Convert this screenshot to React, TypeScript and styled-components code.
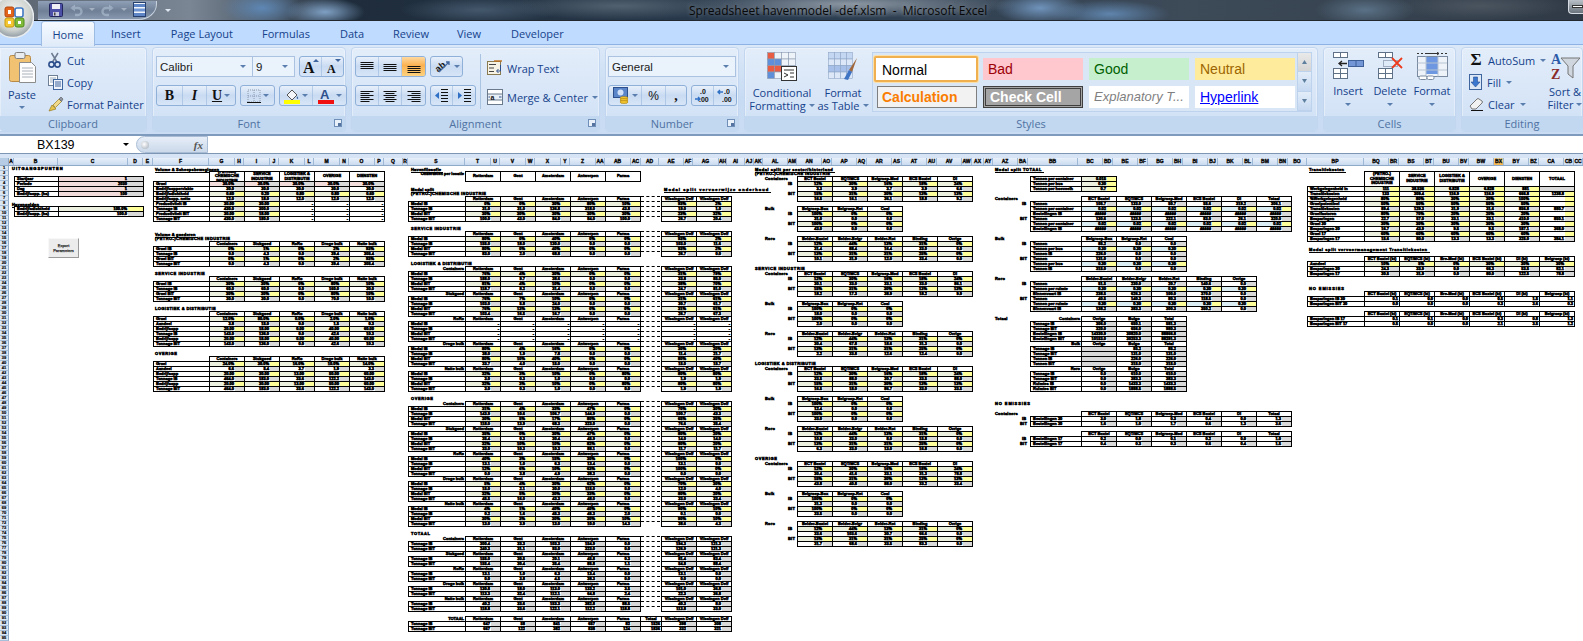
import React from 'react';
import styled, { createGlobalStyle, css } from 'styled-components';

const Global = createGlobalStyle`
  html, body { margin: 0; padding: 0; background: #fff; overflow: hidden; }
  #root { width: 1583px; height: 641px; overflow: hidden; position: relative; }
`;

const uiFont = `"Open Sans", "Noto Sans", sans-serif`;
const cellFont = `"Liberation Sans", Arial, sans-serif`;

/* ---------- window chrome ---------- */
const Window = styled.div`
  width: 1583px; height: 641px; position: relative; overflow: hidden;
  display: flex; flex-direction: column; font-family: ${uiFont};
`;
const TitleBar = styled.header`
  height: 21px; flex: none; display: flex; align-items: center; position: relative;
  border-bottom: 1px solid #23282e;
  box-sizing: border-box;
  background:
    radial-gradient(ellipse 45px 16px at 1040px 8px, #6f93bb 0%, transparent 100%),
    radial-gradient(ellipse 60px 14px at 1110px 14px, #5f84ac 0%, transparent 100%),
    radial-gradient(ellipse 50px 16px at 1365px 10px, #5a7186 0%, transparent 100%),
    radial-gradient(ellipse 90px 14px at 1480px 6px, #4a5560 0%, transparent 100%),
    radial-gradient(ellipse 40px 18px at 262px 8px, #5e87b4 0%, transparent 100%),
    radial-gradient(ellipse 40px 14px at 325px 12px, #7fa0c4 0%, transparent 100%),
    radial-gradient(ellipse 80px 14px at 480px 10px, #44586c 0%, transparent 100%),
    radial-gradient(ellipse 120px 14px at 620px 6px, #52616f 0%, transparent 100%),
    radial-gradient(ellipse 170px 14px at 850px 4px, #8b96a2 0%, transparent 100%),
    linear-gradient(90deg, #5a6470 0%, #7a8694 12%, #1e2c3b 22%, #2a3c50 50%, #3d4a58 75%, #2f3a46 100%);
`;
const QuickAccess = styled.div`
  margin-left: 38px; width: 119px; height: 19px; flex: none; box-sizing: border-box;
  display: flex; align-items: center; padding-left: 8px; gap: 0;
  background: linear-gradient(#8f9fb5, #6f7f95 55%, #8898ae);
  border: 1px solid #c9d3df; border-left: none; border-top: none;
  border-radius: 0 0 18px 0 / 0 0 16px 0;
`;
const QatSlot = styled.span<{ $w: number; $dim?: boolean }>`
  width: ${p => p.$w}px; flex: none; display: flex; align-items: center; justify-content: center;
  opacity: ${p => (p.$dim ? 0.45 : 1)};
`;
const Customize = styled.span`
  margin-left: 8px; width: 6px; flex: none; display: flex;
`;
const WindowTitle = styled.div`
  margin-left: 518px; font-size: 12px; color: #080808; white-space: pre;
  font-family: ${uiFont}; text-shadow: 0 0 5px rgba(255,255,255,.4);
`;
const WinControl = styled.div`
  position: absolute; right: 0; top: 0; width: 15px; height: 14px; box-sizing: border-box;
  background: linear-gradient(#b9c0c8, #6a737c);
  border: 1px solid #d7dce2; border-right: none; border-top: none; border-radius: 0 0 0 4px;
  display: flex; align-items: center; padding-left: 3px;
  &::after { content: ''; width: 12px; height: 3px; background: #fff; border: 1px solid #333; box-sizing: border-box; }
`;
const OfficeOrb = styled.div`
  position: absolute; left: -6px; top: -4px; width: 40px; height: 43px; z-index: 5;
`;
const TabStrip = styled.nav`
  height: 24px; flex: none; display: flex; background: #bfdbff; position: relative;
  border-bottom: 1px solid #8db2e3; box-sizing: border-box;
`;
const Tab = styled.div<{ $x: number; $active?: boolean }>`
  margin-left: ${p => p.$x}px; font-size: 11px; color: #15428b; padding-top: 5px; line-height: 15px; flex: none;
  ${p => p.$active && css`
    height: 25px; width: 54px; text-align: center; box-sizing: border-box; border: 1px solid #9dbce4; border-bottom: none;
    border-radius: 3px 3px 0 0; background: linear-gradient(#f5faff, #e0ebf9); z-index: 2;
  `}
`;
const Ribbon = styled.section`
  height: 91px; flex: none; box-sizing: border-box; padding-top: 2px; display: flex; gap: 5px;
  overflow: hidden; background: linear-gradient(#dbe8f8, #c7dbf3 60%, #c9dcf3);
  border-bottom: 2px solid #7e9bbd;
`;
const Group = styled.div<{ $w: number; $first?: boolean }>`
  width: ${p => p.$w}px; height: 85px; flex: none; box-sizing: border-box; display: flex; flex-direction: column;
  border: 1px solid #c2d7ef; border-radius: 4px;
  ${p => p.$first && 'border-left: none; border-radius: 0 4px 4px 0;'}
  background: linear-gradient(#e3edfa, #cfe0f5);
  box-shadow: inset 0 0 0 1px rgba(255,255,255,.35);
`;
const GroupBody = styled.div<{ $pl?: number; $pt?: number }>`
  height: 68px; flex: none; display: flex; box-sizing: border-box;
  padding-left: ${p => p.$pl ?? 0}px; padding-top: ${p => p.$pt ?? 0}px;
`;
const GroupLabel = styled.div`
  height: 15px; flex: none; position: relative; background: #c2d8f0; color: #4f72a2;
  font-size: 11px; line-height: 15px; text-align: center; border-radius: 0 0 3px 3px;
`;
const Launcher = styled.span`
  position: absolute; right: 3px; top: 3px; width: 8px; height: 8px; box-sizing: border-box;
  border: 1px solid #6f8fb8; background: #e8f0fa;
  &::after { content: ''; position: absolute; right: 0; bottom: 0; width: 3px; height: 3px; background: #54749f; }
`;
const PasteButton = styled.div`
  width: 28px; flex: none; display: flex; flex-direction: column; align-items: center;
  font-size: 11px; color: #15428b; padding-top: 4px; line-height: 13px;
`;
const SmallColumn = styled.div<{ $ml: number; $pt?: number }>`
  margin-left: ${p => p.$ml}px; display: flex; flex-direction: column; padding-top: ${p => p.$pt ?? 0}px;
`;
const SmallItem = styled.div<{ $gap?: number }>`
  height: 22px; display: flex; align-items: center; gap: ${p => p.$gap ?? 4}px; font-size: 11px; color: #15428b; white-space: nowrap;
`;
const ControlRows = styled.div`
  display: flex; flex-direction: column; gap: 8px; padding-top: 8px;
`;
const ControlRow = styled.div`
  display: flex; height: 21px; gap: 4px;
`;
const Combo = styled.div<{ $w: number }>`
  width: ${p => p.$w}px; height: 21px; box-sizing: border-box; display: flex; align-items: center; justify-content: space-between;
  padding: 0 6px 0 3px; background: #eaf2fb; border: 1px solid #abc3e0; font-family: ${cellFont}; font-size: 11.5px; color: #1a1a1a;
  margin-right: ${p => (p.$w > 50 && p.$w < 100 ? '-5px' : '0')};
`;
const BtnSet = styled.div`
  display: flex; height: 21px; box-sizing: border-box; border: 1px solid #8fb0d8; border-radius: 3px;
  background: linear-gradient(#e8f0fb, #c9dbf2 50%, #d7e5f7); overflow: hidden;
`;
const Tool = styled.div<{ $w: number; $on?: boolean; $serif?: boolean }>`
  width: ${p => p.$w}px; height: 100%; flex: none; display: flex; align-items: center; justify-content: center; gap: 2px;
  border-right: 1px solid rgba(141,176,216,.5); box-sizing: border-box; color: #111;
  &:last-child { border-right: none; }
  ${p => p.$serif && `font-family: "Liberation Serif", serif; font-size: 14px; font-weight: bold;`}
  ${p => p.$on && `background: linear-gradient(#ffd9a0, #fbb14f 45%, #fdd27f);`}
`;
const Caret = styled.span<{ $c?: string }>`
  width: 0; height: 0; flex: none; display: inline-block;
  border-left: 3px solid transparent; border-right: 3px solid transparent; border-top: 3px solid ${p => p.$c ?? '#5a7fae'};
`;
const Divider = styled.div`
  width: 1px; height: 55px; margin: 6px 6px 0 4px; background: #a9c3e2; flex: none;
`;
const BigButton = styled.div<{ $w: number }>`
  width: ${p => p.$w}px; flex: none; display: flex; flex-direction: column; align-items: center;
  padding-top: 4px; font-size: 11px; line-height: 13px; color: #15428b; text-align: center; white-space: nowrap;
  svg { margin-bottom: 5px; }
`;
const CaretLine = styled.span`
  display: inline-flex; align-items: center; gap: 3px;
`;
const Gallery = styled.div`
  width: 426px; height: 60px; margin-left: 3px; margin-top: 4px; box-sizing: border-box; flex: none;
  padding: 5px 0 0 4px; display: grid; grid-template-columns: repeat(4, 100px); grid-auto-rows: 22px; gap: 6px;
  background: #d9e6f6; border: 1px solid #bdd2ec;
`;
const StyleCell = styled.div<{ $bg: string; $fg: string; $bold?: boolean; $italic?: boolean; $box?: string; $selected?: boolean; $link?: boolean }>`
  font-family: ${cellFont}; font-size: ${p => (p.$italic ? 13 : 14)}px; line-height: 20px; box-sizing: border-box; padding-left: 4px; white-space: nowrap; overflow: hidden;
  background: ${p => p.$bg}; color: ${p => p.$fg};
  font-weight: ${p => (p.$bold ? 700 : 400)}; font-style: ${p => (p.$italic ? 'italic' : 'normal')};
  text-decoration: ${p => (p.$link ? 'underline' : 'none')};
  border: ${p => p.$box ?? '1px solid transparent'};
  ${p => p.$selected && `margin: -2px -1px -2px -3px; height: 26px; line-height: 24px; padding-left: 6px; border: 2px solid #f0b050; box-shadow: 0 0 0 1px #fae0ac; border-radius: 2px;`}
`;
const Scroller = styled.div`
  width: 14px; height: 60px; margin-top: 4px; flex: none; display: flex; flex-direction: column; box-sizing: border-box;
  border: 1px solid #bdd2ec; border-left: none;
`;
const ScrollPart = styled.div<{ $dim?: boolean }>`
  flex: 1; display: flex; align-items: center; justify-content: center; border-bottom: 1px solid #bdd2ec;
  background: ${p => (p.$dim ? 'linear-gradient(#e9e9e9,#d5d5d5)' : 'linear-gradient(#e3edf9,#c6d9f1)')};
`;
const Sigma = styled.span`
  font-family: "Liberation Serif", serif; font-size: 17px; font-weight: bold; color: #111; width: 14px; line-height: 14px; text-align: center;
`;

/* ---------- formula bar ---------- */
const FormulaBar = styled.div`
  height: 18px; flex: none; display: flex; box-sizing: border-box; background: #fff; border-bottom: 1px solid #7d96b3;
`;
const NameBox = styled.div`
  width: 136px; flex: none; box-sizing: border-box; padding: 0 7px 0 37px; display: flex; align-items: center; justify-content: space-between;
  font-family: ${cellFont}; font-size: 12.5px; color: #000;
`;
const FxPill = styled.div`
  width: 72px; flex: none; box-sizing: border-box; border: 1px solid #a9bdd6; border-radius: 10px 0 0 10px;
  background: linear-gradient(#e7eef8, #cbd9ea); display: flex; align-items: center; justify-content: space-between; padding: 0 4px;
  font-family: "Liberation Serif", serif; font-style: italic; font-weight: bold; font-size: 11px; color: #555;
`;
const Orb = styled.span`
  width: 8px; height: 8px; border-radius: 50%; background: radial-gradient(circle at 40% 40%, #fff, #9fa9b5);
`;
const HeadStrip = styled.div`
  height: 4px; flex: none; background: #d6e4f5;
`;

/* ---------- sheet ---------- */
const ColHeadRow = styled.div`
  height: 8px; flex: none; display: flex; border-bottom: 1px solid #8fa9c8; box-sizing: border-box;
`;
const Corner = styled.div`
  width: 9px; flex: none; background: #b6cbe4; box-sizing: border-box; border-right: 1px solid #8fa9c8;
`;
const ColHead = styled.div<{ $w: number; $hi?: boolean }>`
  width: ${p => p.$w}px; flex: none; box-sizing: border-box; border-right: 1px solid #9fb8d6;
  background: ${p => (p.$hi ? 'linear-gradient(#fbdf9f,#f8b84e)' : 'linear-gradient(#e8f0fa,#c9daef)')};
  font: bold 5px/7px ${cellFont}; text-align: center; color: #111; overflow: hidden;
  -webkit-text-stroke: .35px #000;
`;
const SheetBody = styled.div`
  flex: 1; display: flex; min-height: 0; overflow: hidden; background: #fff;
`;
const RowHeads = styled.div`
  width: 9px; flex: none; display: flex; flex-direction: column;
`;
const RowHead = styled.div`
  height: 5px; flex: none; box-sizing: border-box; background: #dbe6f4; border-bottom: 1px solid #a8bfda; border-right: 1px solid #8fa9c8;
  font: bold 4px/4px ${cellFont}; text-align: center; color: #111; overflow: hidden; -webkit-text-stroke: .2px #000;
`;
const Section = styled.div<{ $w: number }>`
  width: ${p => p.$w}px; flex: none; display: grid; grid-auto-rows: 5px; grid-template-columns: 1fr; align-content: start;
`;
const Note = styled.div<{ $k: number; $x: number; $ls?: number; $under?: boolean }>`
  grid-column: 1; grid-row: ${p => p.$k + 1}; justify-self: start; margin-left: ${p => p.$x}px; white-space: nowrap;
  font: bold 4px/5px ${cellFont}; color: #000; letter-spacing: ${p => p.$ls ?? 0.2}px;
  -webkit-text-stroke: .5px #000;
  ${p => p.$under && `border-bottom: 1px solid #000; height: 4px; line-height: 4px; margin-top: 2px; padding-right: 2px;`}
`;
const Table = styled.div<{ $k: number; $n: number; $x: number; $cols: string }>`
  grid-column: 1; grid-row: ${p => p.$k + 1} / span ${p => p.$n}; justify-self: start; margin-left: ${p => p.$x}px;
  display: grid; grid-template-columns: ${p => p.$cols}; grid-auto-rows: 5px;
  font: bold 4px/4px ${cellFont}; color: #000; -webkit-text-stroke: .5px #000;
`;
const kindBg: Record<string, string> = { g: '#ebf1de', w: '#fff', p: '#f2dcdb', b: '#daeef3', n: '#fff', y: '#fff', a: '#d9d9d9', o: '#fff' };
const Cell = styled.div<{ $span?: number; $kind: string }>`
  box-sizing: border-box; margin: 0 -1px -1px 0; border: 1px solid #000; display: flex; overflow: hidden; white-space: nowrap;
  grid-row: span ${p => p.$span ?? 1}; background: ${p => kindBg[p.$kind] ?? '#fff'};
`;
const Label = styled(Cell)`
  padding-left: 2px;
`;
const Head = styled(Cell)`
  justify-content: center; text-align: center; align-items: center; line-height: 4.6px;
  white-space: ${p => ((p.$span ?? 1) > 1 ? 'normal' : 'nowrap')};
`;
const Right = styled.div<{ $span?: number }>`
  grid-row: span ${p => p.$span ?? 1}; text-align: right; padding-right: 1px; white-space: nowrap; box-sizing: border-box; height: 5px; line-height: 6px;
`;
const Blank = styled.div<{ $span?: number }>`
  grid-row: span ${p => p.$span ?? 1};
`;
const Dashed = styled.div`
  border-top: 1px dashed #000; margin: 0 1px -1px 1px; height: 6px; box-sizing: border-box;
`;
const Value = styled.div`
  flex: 1; text-align: right; padding-right: 1px; min-width: 0;
`;
const Mark = styled.div<{ $c: string; $w?: number }>`
  width: ${p => p.$w ?? 9}px; flex: none; background: ${p => p.$c};
`;
const MacroButton = styled.div`
  grid-column: 1; grid-row: 15 / span 5; margin: 2px 0 0 39px; width: 31px; height: 20px; justify-self: start; box-sizing: border-box;
  background: #ececec; border: 1px solid; border-color: #f8f8f8 #9a9a9a #9a9a9a #f8f8f8;
  font: 4px/5px ${cellFont}; color: #222; text-align: center; padding-top: 4px; -webkit-text-stroke: .25px #333;
`;

/* ---------- table data ---------- */
type Spec = { k: number; x: number; cols: string; rows: string[][]; tall?: number };

const T: React.FC<Spec & { mark?: number }> = ({ k, x, cols, rows, tall, mark }) => {
  const n = rows.length + (tall ? tall - 1 : 0);
  return (
    <Table $k={k} $n={n} $x={x} $cols={cols}>
      {rows.map((row, ri) =>
        row.map((c, ci) => {
          const kind = c[0];
          const text = c.slice(1);
          const span = ri === 0 && tall ? tall : 1;
          const key = `${ri}-${ci}`;
          if (kind === 'e') return <Blank key={key} $span={span} />;
          if (kind === 'r') return <Right key={key} $span={span}>{text}</Right>;
          if (kind === 'd') return <Dashed key={key} />;
          if (kind === 'l') return <Label key={key} $kind="n" $span={span}>{text}</Label>;
          if (kind === 'h') return <Head key={key} $kind="n" $span={span}>{text}</Head>;
          const mc = kind === 'g' || kind === 'b' || kind === 'y' ? '#ffff99' : kind === 'w' || kind === 'p' || kind === 'o' ? '#d9d9d9' : '';
          return (
            <Cell key={key} $kind={kind} $span={span}>
              <Value>{text}</Value>
              {mc && <Mark $c={mc} $w={mark} />}
            </Cell>
          );
        }),
      )}
    </Table>
  );
};

const goods = ['Containers', 'Stukgoed', 'RoRo', 'Droge bulk', 'Natte bulk'];
const gHead = (first = 'e') => [first, ...goods.map(g => 'h' + g)];
const cols5B = '56px repeat(5, 35px)';
const secB: Spec[] = [
  { k: 1, x: 0, cols: cols5B, tall: 2, rows: [
    ['e', 'h(PETRO-) CHEMISCHE INDUSTRIE', 'hSERVICE INDUSTRIE', 'hLOGISTIEK & DISTRIBUTIE', 'hOVERIGE', 'hDIENSTEN'],
    ['lGroei', 'p30.0%', 'p30.0%', 'p30.0%', 'p30.0%', 'p30.0%'],
    ['lBedrijfsoppervlakte', 'w30.0', 'w30.0', 'w30.0', 'w30.0', 'w30.0'],
    ['lBedrijfsdichtheid', 'g0.60', 'g0.20', 'g0.80', 'g0.80', 'g0.60'],
    ['lBedrijfsopp. netto', 'w12.0', 'w18.0', 'w12.0', 'w12.0', 'w12.0'],
    ['lProductiviteit IB', 'g30.00', 'g30.00', 'n-', 'n-', 'n-'],
    ['lTonnage IB', 'w430.0', 'w300.0', 'n-', 'n-', 'n-'],
    ['lProductiviteit BIT', 'g30.00', 'g18.00', 'n-', 'n-', 'n-'],
    ['lTonnage BIT', 'w430.0', 'w180.0', 'n-', 'n-', 'n-'],
  ]},
  { k: 15, x: 0, cols: cols5B, rows: [
    gHead(),
    ['lGroei IB', 'g0%', 'g1%', 'g0%', 'g2%', 'g93%'],
    ['lTonnage IB', 'w0.0', 'w4.3', 'w0.0', 'w39.4', 'w305.4'],
    ['lGroei BIT', 'g0%', 'g1%', 'g0%', 'g2%', 'g93%'],
    ['lTonnage BIT', 'w0.0', 'w4.3', 'w0.0', 'w39.4', 'w305.4'],
  ]},
  { k: 22, x: 0, cols: cols5B, rows: [
    gHead(),
    ['lGroei IB', 'g30%', 'g30%', 'g0%', 'g80%', 'g10%'],
    ['lTonnage IB', 'w60.0', 'w60.0', 'w0.0', 'w160.0', 'w30.0'],
    ['lGroei BIT', 'g30%', 'g30%', 'g0%', 'g80%', 'g10%'],
    ['lTonnage BIT', 'w30.0', 'w30.0', 'w0.0', 'w70.0', 'w10.0'],
  ]},
  { k: 29, x: 0, cols: cols5B, rows: [
    gHead(),
    ['lGroei', 'g12.0%', 'g80.0%', 'g0.0%', 'g2.0%', 'g1.0%'],
    ['lAandeel', 'w3.8', 'w15.0', 'w0.0', 'w1.5', 'w0.3'],
    ['lBedrijfsopp', 'g20.00', 'g18.00', 'g0.00', 'g40.00', 'g60.00'],
    ['lTonnage IB', 'w143.0', 'w136.0', 'w0.0', 'w42.6', 'w10.3'],
    ['lBedrijfsopp', 'g20.00', 'g18.00', 'g0.00', 'g40.00', 'g60.00'],
    ['lTonnage BIT', 'w143.0', 'w136.0', 'w0.0', 'w42.6', 'w10.3'],
  ]},
  { k: 38, x: 0, cols: cols5B, rows: [
    gHead(),
    ['lGroei', 'g24.0%', 'g30.0%', 'g16.0%', 'g10.0%', 'g14.0%'],
    ['lAandeel', 'w6.6', 'w5.4', 'w3.7', 'w1.9', 'w3.3'],
    ['lBedrijfsopp', 'g20.00', 'g30.00', 'g13.00', 'g50.00', 'g60.00'],
    ['lTonnage IB', 'w464.0', 'w183.0', 'w33.6', 'w122.2', 'w143.0'],
    ['lBedrijfsopp', 'g20.00', 'g30.00', 'g13.00', 'g50.00', 'g60.00'],
    ['lTonnage BIT', 'w464.0', 'w183.0', 'w33.6', 'w122.2', 'w143.0'],
  ]},
];

const ports = ['Rotterdam', 'Gent', 'Amsterdam', 'Antwerpen', 'Parma'];
const colsC = '57px repeat(5, 35px) 21px 35px 35px';
const cHead = (first: string, mid = 'd') => [first, ...ports.map(p => 'h' + p), mid, 'hVlissingen Delf', 'hVlissingen Delf'];
const cRows = (a: string[], b: string[], c: string[], d: string[], ka = 'g', kb = 'w') => [
  ['lModal IB', ...a.slice(0, 5).map(v => ka + v), 'd', ...a.slice(5).map(v => ka + v)],
  ['lTonnage IB', ...b.slice(0, 5).map(v => kb + v), 'd', ...b.slice(5).map(v => kb + v)],
  ['lModal BIT', ...c.slice(0, 5).map(v => ka + v), 'd', ...c.slice(5).map(v => ka + v)],
  ['lTonnage BIT', ...d.slice(0, 5).map(v => kb + v), 'd', ...d.slice(5).map(v => kb + v)],
];
const sp = (s: string) => s.split(' ');
const cBlock = (y: number, first: string, a: string, b: string, c: string, d: string): Spec => ({
  k: (y - 167) / 5, x: 5, cols: colsC,
  rows: [cHead(first), ...cRows(sp(a), sp(b), sp(c), sp(d))],
});
const tBlock = (y: number, first: string, a: string, b: string): Spec => ({
  k: (y - 167) / 5, x: 5, cols: colsC,
  rows: [cHead(first),
    ['lTonnage IB', ...sp(a).slice(0, 5).map(v => 'w' + v), 'd', ...sp(a).slice(5).map(v => 'w' + v)],
    ['lTonnage BIT', ...sp(b).slice(0, 5).map(v => 'w' + v), 'd', ...sp(b).slice(5).map(v => 'w' + v)],
  ],
});
const dash = ['-', '-', '-', '-', '-', '-', '-'];
const secC: Spec[] = [
  { k: 1, x: 5, cols: '57px repeat(5, 35px)', tall: 2, rows: [
    ['rOnderdelen per locatie', ...ports.map(p => 'h' + p)],
  ]},
  cBlock(197, 'e', '0% 0% 30% 80% 10% 93% 2%', '31.0 31.0 136.8 318.0 43.8 19.0 1.0', '30% 30% 30% 30% 30% 23% 32%', '100.0 43.0 84.0 84.0 100.0 26.7 20.4'),
  cBlock(232, 'e', '80% 0% 40% 0% 0% 93% 2%', '155.0 18.0 130.0 0.0 0.0 103.0 11.6', '80% 0% 40% 0% 0% 93% 2%', '83.0 2.0 68.8 0.0 0.0 26.7 0.0'),
  cBlock(267, 'rContainers', '76% 4% 30% 0% 0% 31% 79%', '188.0 9.7 38.6 0.0 0.0 33.8 85.0', '81% 4% 10% 0% 0% 38% 70%', '118.7 8.2 31.4 0.0 0.0 24.7 81.0'),
  cBlock(292, 'rStukgoed', '76% 7% 10% 0% 0% 31% 61%', '103.0 5.8 24.0 0.0 0.0 30.7 61.7', '76% 13% 13% 0% 0% 31% 61%', '103.4 16.5 16.7 0.0 0.0 26.7 67.3'),
  { k: 30, x: 5, cols: colsC, rows: [cHead('rRoRo'), ...cRows(dash, dash, dash, dash, 'n', 'n')] },
  cBlock(342, 'rDroge bulk', '80% 4% 16% 0% 0% 30% 20%', '38.0 1.9 7.8 0.0 0.0 11.4 21.7', '80% 10% 40% 0% 0% 80% 40%', '33.7 4.0 15.0 0.0 0.0 15.0 15.7'),
  cBlock(367, 'rNatte bulk', '32% 3% 10% 0% 80% 80% 80%', '3.0 0.3 1.0 0.0 0.0 1.9 1.9', '32% 3% 10% 0% 80% 80% 80%', '3.0 0.3 1.0 0.0 0.0 1.9 1.9'),
  cBlock(402, 'rContainers', '31% 4% 33% 47% 0% 70% 30%', '143.9 10.6 106.7 144.9 0.0 100.7 43.3', '30% 5% 17% 80% 0% 65% 35%', '118.0 13.9 68.3 323.0 0.0 76.6 35.4'),
  cBlock(427, 'rStukgoed', '35% 0% 30% 47% 0% 80% 20%', '35.4 0.3 30.4 45.9 0.0 14.0 14.0', '32% 10% 10% 82% 0% 80% 20%', '33.0 10.3 10.3 88.1 0.0 11.7 11.7'),
  cBlock(452, 'rRoRo', '40% 3% 15% 30% 0% 100% 0%', '13.1 1.0 6.3 13.4 0.0 13.1 0.0', '12% 6% 10% 63% 0% 100% 0%', '0.0 3.8 4.9 38.3 0.0 0.0 0.0'),
  cBlock(477, 'rDroge bulk', '5% 4% 30% 62% 0% 70% 30%', '15.0 2.1 30.0 115.0 0.0 12.0 4.0', '32% 5% 30% 33% 0% 80% 20%', '45.5 16.0 43.3 48.0 0.0 33.0 33.4'),
  cBlock(502, 'rNatte bulk', '4% 1% 40% 40% 0% 90% 10%', '0.2 1.6 45.3 45.3 2.0 0.1 0.0', '30% 3% 30% 30% 10% 90% 10%', '13.0 3.9 13.0 10.0 14.3 38.6 4.3'),
  tBlock(537, 'rContainers', '300.4 33.3 103.3 154.9 0.0 194.3 121.3', '240.3 31.1 93.0 323.0 0.0 126.9 121.3'),
  tBlock(552, 'rStukgoed', '155.0 30.5 20.1 45.8 0.3 81.4 83.4', '155.4 30.4 35.4 85.8 1.1 54.8 88.4'),
  tBlock(567, 'rRoRo', '13.1 1.0 6.3 13.4 0.0 13.1 0.0', '0.0 3.8 4.5 38.3 0.0 0.0 0.0'),
  tBlock(582, 'rDroge bulk', '130.8 18.0 113.0 133.2 3.5 101.0 36.8', '113.3 32.4 112.1 64.8 2.4 22.3 36.8'),
  tBlock(597, 'rNatte bulk', '40.2 33.6 153.3 382.8 88.5 40.3 8.0', '118.8 33.6 122.1 112.2 118.8 113.8 33.0'),
  { k: 90, x: 5, cols: colsC, rows: [
    [...cHead('rTOTAAL', 'hTotaal')],
    ['lTonnage IB', 'w647', 'w58', 'w841', 'w657', 'w82', 'n1526', 'w398', 'w308'],
    ['lTonnage BIT', 'w667', 'w122', 'w382', 'w838', 'w124', 'n1836', 'w332', 'w321'],
  ]},
];

const cols5D = 'repeat(5, 35px)';
const dRows = (a: string, b: string, c: string, d: string) => [
  sp(a).map(v => 'g' + v), sp(b).map(v => 'w' + v), sp(c).map(v => 'g' + v), sp(d).map(v => 'w' + v),
];
const dHeadA = ['hECT Boxtel', 'hEQT/MCS', 'hBelgroep-Mod', 'hECS Boxtel', 'hDI'];
const dHeadB = ['hBelgroep-Box', 'hBelgroep-Ret', 'hCoal'];
const dHeadC = ['hBelder-Boxtel', 'hBelder-Belgr', 'hBelder-Rot', 'hBinding', 'hOvrige'];
const sect = (y: number, a: string[], b: string[], c: string[]): Spec[] => [
  { k: (y - 167) / 5, x: 52, cols: cols5D, rows: [dHeadA, ...dRows(a[0], a[1], a[2], a[3])] },
  { k: (y + 30 - 167) / 5, x: 52, cols: 'repeat(3, 35px)', rows: [dHeadB, ...dRows(b[0], b[1], b[2], b[3])] },
  { k: (y + 60 - 167) / 5, x: 52, cols: cols5D, rows: [dHeadC, ...dRows(c[0], c[1], c[2], c[3])] },
];
const secD: Spec[] = [
  ...sect(177, ['12% 30% 16% 18% 24%', '3.3 3.9 3.7 3.9 6.6', '15% 31% 30% 13% 13%', '16.5 16.1 36.1 18.8 9.2'],
    ['100% 0% 0%', '31.0 0.0 0.0', '100% 0% 0%', '43.0 0.0 0.0'],
    ['12% 44% 13% 31% 0%', '31.4 88.4 16.4 33.0 0.0', '13% 31% 31% 25% 0%', '10.1 31.9 12.0 33.4 0.0']),
  ...sect(272, ['12% 30% 16% 18% 24%', '30.1 33.0 33.1 33.0 86.1', '15% 31% 30% 13% 13%', '18.2 17.3 38.9 18.2 9.9'],
    ['100% 0% 0%', '18.0 0.0 0.0', '100% 0% 0%', '2.0 0.0 0.0'],
    ['12% 44% 13% 31% 0%', '30.4 67.8 18.6 31.3 0.0', '13% 31% 31% 25% 0%', '2.2 33.8 12.6 12.4 0.0']),
  ...sect(367, ['12% 30% 16% 18% 24%', '33.5 88.0 30.7 33.5 88.0', '15% 31% 30% 13% 13%', '16.5 18.0 86.7 33.0 33.5'],
    ['100% 0% 0%', '12.4 0.0 0.0', '100% 0% 0%', '33.0 0.0 0.0'],
    ['12% 44% 13% 31% 0%', '10.8 33.0 8.0 15.8 0.0', '13% 31% 31% 25% 0%', '6.3 33.0 13.0 16.8 0.0']),
  ...sect(462, ['12% 30% 16% 18% 24%', '30.4 41.6 33.1 31.3 78.8', '15% 31% 30% 13% 13%', '43.8 40.8 88.0 33.2 33.4'],
    ['100% 0% 0%', '31.3 0.0 0.0', '100% 0% 0%', '33.5 0.0 0.0'],
    ['12% 44% 13% 31% 0%', '33.6 103.6 30.7 66.6 0.0', '13% 31% 31% 25% 0%', '31.7 68.6 33.5 83.3 0.0']),
];

const colsE = (n: number) => `51px repeat(${n}, 35px)`;
const hE6 = ['e', ...dHeadA.map(x => x), 'hTotaal'];
const eRows = (tail: string[], k2: string, v: string[][]) =>
  v.map((vals, i) => ['l' + (i % 3 === 0 ? 'Tonnen' : i % 3 === 1 ? tail[0] : tail[1]), ...vals.map(x => (i % 3 === 1 ? k2 : 'w') + x)]);
const H = '#####';
const secE: Spec[] = [
  { k: 2, x: 45, cols: '51px 35px', rows: [
    ['lTonnen per container', 'g0.015'], ['lTonnen per bus', 'g0.30'], ['lTonnen per hoeveelh', 'g0.7'],
  ]},
  { k: 6, x: 45, cols: colsE(6), rows: [hE6, ...eRows(['Tonnen per container', 'Bestellingen IB'], 'b', [
    sp('105.7 133.0 50.7 55.6 319.2 306.1'), sp('0.02 0.02 0.02 0.02 0.02 0.02'), Array(6).fill(H),
    sp('130.6 123.5 222.1 83.0 26.1 320.0'), sp('0.02 0.02 0.02 0.02 0.02 0.02'), Array(6).fill(H),
  ])]},
  { k: 14, x: 45, cols: colsE(3), rows: [['e', ...dHeadB], ...eRows(['Tonnen per bus', 'Tonnen IB'], 'b', [
    sp('85.2 0.0 0.0'), sp('0.30 0.30 0.30'), sp('226.0 0.0 0.0'),
    sp('131.0 0.0 0.0'), sp('0.30 0.30 0.30'), sp('315.0 0.0 0.0'),
  ])]},
  { k: 22, x: 45, cols: colsE(5), rows: [['e', ...dHeadC], ...eRows(['Tonnen per ruimte', 'Binnenvaart IB'], 'b', [
    sp('51.5 230.0 20.7 140.6 0.0'), sp('0.30 0.30 0.30 0.30 0.30'), sp('238.5 626.3 100.0 370.0 0.0'),
    sp('40.5 140.3 80.3 118.5 0.0'), sp('0.30 0.30 0.30 0.30 0.30'), sp('138.2 383.3 300.3 350.2 0.0'),
  ])]},
  { k: 30, x: 45, cols: colsE(3), rows: [
    ['rContainers', 'hOvrige', 'hBulgo', 'hTotal'],
    ['lTonnage IB', 'w306.0', 'w650.1', 'w581.3'], ['lTonnage BIT', 'w320.0', 'w656.0', 'w980.3'],
    ['lBestellingen IB', 'w14330.9', 'w30820.0', 'w88866.8'], ['lBestellingen BIT', 'w10153.0', 'w30253.3', 'w88291.3'],
    ['rBulk', 'hOvrige', 'hBulgo', 'hTotal'],
    ['lTonnage IB', 'a', 'w85.2', 'w85.2'], ['lTonnage BIT', 'a', 'w131.0', 'w131.0'], ['lTonnen IB', 'a', 'w226.0', 'w226.0'], ['lTonnen BIT', 'a', 'w315.0', 'w315.0'],
    ['rRoro', 'hOvrige', 'hBulgo', 'hTotal'],
    ['lTonnage IB', 'w0.0', 'w610.0', 'w610.0'], ['lTonnage BIT', 'w0.0', 'w383.3', 'w383.3'], ['lRuimtes IB', 'w0.0', 'w1433.3', 'w1433.3'], ['lRuimtes BIT', 'w0.0', 'w1888.5', 'w1888.5'],
  ]},
  { k: 49, x: 45, cols: colsE(6), rows: [hE6,
    ['lBestellingen 30', 'w3.0', 'w1.8', 'w0.3', 'w0.4', 'w0.0', 'w1.3'],
    ['lBestellingen 30', 'w1.6', 'w1.0', 'w1.7', 'w0.6', 'w1.3', 'w3.6'],
  ]},
  { k: 53, x: 45, cols: colsE(6), rows: [hE6,
    ['lBestellingen 17', 'w0.2', 'w0.0', 'w0.1', 'w0.2', 'w0.0', 'w1.0'],
    ['lBestellingen 17', 'w0.4', 'w0.3', 'w0.3', 'w0.6', 'w0.4', 'w1.5'],
  ]},
];

const colsF = '57px repeat(6, 35px)';
const vF = (label: string, ...v: string[]) => ['l' + label, ...v];
const hF6 = ['e', 'hECT Boxtel (kt)', 'hEQT/MCS (kt)', 'hBre-Mod (kt)', 'hECS Boxtel (kt)', 'hDI (kt)', 'hBelgroep (kt)'];
const secF: Spec[] = [
  { k: 1, x: 0, cols: colsF, tall: 3, rows: [
    ['e', 'h(PETRO-) CHEMISCHE INDUSTRIE', 'hSERVICE INDUSTRIE', 'hLOGISTIEK & DISTRIBUTIE', 'hOVERIGE', 'hDIENSTEN', 'hTOTAAL'],
    vF('Werkgelegenheid in', 'g111', 'g38.536', 'g6.828', 'g6.828', 'g881', 'a'),
    vF('Transitiekosten', 'y133', 'y309.4', 'y116.9', 'y116.9', 'y666.8', 'y1238.8'),
    vF('%Werkgelegenheid', 'g80%', 'g80%', 'g30%', 'g30%', 'g100%', 'y'),
    vF('Groeipotentieel', 'g50%', 'g50%', 'g50%', 'g50%', 'g50%', 'y'),
    vF('Transitiekosten', 'w89.4', 'w129.3', 'w31.9', 'w31.6', 'w856.8', 'w880.7'),
    vF('Groeifactoren', 'g80%', 'g70%', 'g20%', 'g20%', 'g20%', 'y'),
    vF('Besparingen', 'w22.7', 'w57.0', 'w33.1', 'w33.1', 'w410.0', 'w850.1'),
    vF('Groei 30', 'g30%', 'g30%', 'g30%', 'g30%', 'g30%', 'y'),
    vF('Besparingen 30', 'w16.7', 'w43.9', 'w9.5', 'w9.5', 'w187.1', 'w368.0'),
    vF('Groei 17', 'g60%', 'g60%', 'g60%', 'g60%', 'g60%', 'y'),
    vF('Besparingen 17', 'w15.6', 'w80.0', 'w13.3', 'w13.3', 'w325.0', 'w384.1'),
  ]},
  { k: 18, x: 0, cols: colsF, rows: [hF6,
    vF('Aandeel', 'g10%', 'g5%', 'g0%', 'g30%', 'g30%', 'g30%'),
    vF('Besparingen 30', 'w24.3', 'w33.9', 'w0.0', 'w66.3', 'w53.5', 'w82.1'),
    vF('Besparingen 17', 'w30.5', 'w31.9', 'w0.0', 'w80.0', 'w122.5', 'w78.8'),
  ]},
  { k: 25, x: 0, cols: colsF, rows: [hF6,
    vF('Besparingen IB 30', 'n0.1', 'n0.0', 'n0.0', 'n0.5', 'n1.5', 'n1.1'),
    vF('Besparingen BIT 30', 'n0.0', 'n0.0', 'n0.0', 'n0.3', 'n3.6', 'n0.3'),
  ]},
  { k: 29, x: 0, cols: colsF, rows: [hF6,
    vF('Besparingen IB 17', 'n0.1', 'n0.1', 'n0.0', 'n0.3', 'n0.8', 'n1.3'),
    vF('Besparingen BIT 17', 'n0.5', 'n0.0', 'n0.0', 'n2.1', 'n3.5', 'n1.2'),
  ]},
];

/* ---------- column headings ---------- */
const edges = [9,14,58,128,143,153,209,235,244,270,279,305,314,340,349,375,384,403,408,465,491,500,526,535,561,570,596,605,631,641,659,684,693,719,727,745,754,763,788,797,822,832,857,867,892,902,927,937,962,972,984,993,1018,1028,1078,1103,1113,1138,1148,1173,1183,1208,1218,1243,1253,1278,1288,1307,1364,1389,1399,1424,1434,1459,1469,1494,1504,1529,1539,1564,1574,1583];
const colName = (i: number) => {
  if (i < 26) return String.fromCharCode(65 + i);
  return String.fromCharCode(64 + Math.floor(i / 26)) + String.fromCharCode(65 + (i % 26));
};

/* ---------- icons ---------- */
const Svg: React.FC<{ w: number; h?: number; children: React.ReactNode }> = ({ w, h, children }) => (
  <svg width={w} height={h ?? w} viewBox={`0 0 ${w} ${h ?? w}`} style={{ flex: 'none', display: 'block' }}>{children}</svg>
);
const OfficeLogo = () => (
  <svg width="40" height="43" viewBox="0 0 40 43">
    <defs>
      <radialGradient id="orb" cx="50%" cy="40%" r="60%">
        <stop offset="0" stopColor="#f4f5f2" /><stop offset=".7" stopColor="#cfd3cf" /><stop offset="1" stopColor="#8f9aa3" />
      </radialGradient>
    </defs>
    <circle cx="19" cy="21" r="20.5" fill="url(#orb)" stroke="#e8ecef" strokeWidth="1.5" />
    <rect x="11" y="11" width="9" height="10" rx="2" fill="#e2641b" stroke="#b34710" />
    <rect x="21" y="12" width="8" height="9" rx="2" fill="#fff" stroke="#3f78c4" strokeWidth="1.6" />
    <rect x="11" y="22" width="9" height="9" rx="2" fill="#f3c530" stroke="#c99c12" />
    <rect x="21" y="22" width="9" height="9" rx="2" fill="#7fbb38" stroke="#4e8b1f" />
    <rect x="14" y="14" width="3" height="4" fill="#fff" />
    <rect x="14" y="25" width="3" height="3" fill="#fff" />
    <rect x="24" y="25" width="3" height="3" fill="#fff" />
  </svg>
);
const SaveIcon = () => (
  <Svg w={14}>
    <rect x=".5" y=".5" width="13" height="13" rx="1" fill="#4c4fa6" stroke="#23255f" />
    <rect x="3" y="1" width="8" height="5" fill="#eef0f6" />
    <rect x="4" y="9" width="6" height="4" fill="#c8cbe0" /><rect x="5" y="9.5" width="1.5" height="3" fill="#444" />
  </Svg>
);
const UndoIcon: React.FC<{ flip?: boolean }> = ({ flip }) => (
  <Svg w={14}>
    <g transform={flip ? 'translate(14,0) scale(-1,1)' : undefined}>
      <path d="M3 5 H9 a3.5 3.5 0 0 1 0 7 H6" fill="none" stroke="#c5d4e6" strokeWidth="2.4" />
      <path d="M6 1.5 L1.5 5 L6 8.5 Z" fill="#c5d4e6" />
    </g>
  </Svg>
);
const FormIcon = () => (
  <Svg w={13} h={15}>
    <rect x=".5" y=".5" width="12" height="14" fill="#f2f5fa" stroke="#28406e" />
    <rect x="1" y="2" width="11" height="3" fill="#5e86c6" /><rect x="1" y="6.5" width="11" height="3" fill="#6f96d2" /><rect x="1" y="11" width="11" height="3" fill="#5e86c6" />
  </Svg>
);
const PasteIcon = () => (
  <Svg w={27} h={31}>
    <rect x=".5" y="3.5" width="21" height="26" rx="2" fill="#f2c273" stroke="#b78a46" />
    <rect x="6" y=".5" width="10" height="6" rx="1.5" fill="#e9ecef" stroke="#7f7f7f" />
    <path d="M10.5 10.5 H22.5 L26.5 14.5 V30.5 H10.5 Z" fill="#fdfdfd" stroke="#8c8c8c" />
    <path d="M13 16h11M13 19h11M13 22h11M13 25h11" stroke="#aab2bb" />
  </Svg>
);
const CutIcon = () => (
  <Svg w={13} h={16}>
    <path d="M3.5 1 L9 10 M10 1 L4.5 10" stroke="#6d7c92" strokeWidth="1.5" />
    <circle cx="3.5" cy="12.5" r="2.6" fill="none" stroke="#2d4f8c" strokeWidth="1.6" />
    <circle cx="9.5" cy="12.5" r="2.6" fill="none" stroke="#2d4f8c" strokeWidth="1.6" />
  </Svg>
);
const CopyIcon = () => (
  <Svg w={15}>
    <rect x=".5" y=".5" width="9" height="10" fill="#fff" stroke="#6f7f95" /><path d="M2 3h6M2 5h6M2 7h6" stroke="#9ab" />
    <rect x="5.5" y="4.5" width="9" height="10" fill="#eef3fb" stroke="#3f659e" /><path d="M7 7h6M7 9h6M7 11h6" stroke="#3f659e" />
  </Svg>
);
const BrushIcon = () => (
  <Svg w={16}>
    <path d="M1 15 L4 9 L8 13 Z" fill="#e8c34a" stroke="#9a7c1c" strokeWidth=".7" />
    <path d="M5 9 L11 3 L13.5 5.5 L7.5 11.5 Z" fill="#f0d98a" stroke="#9a7c1c" strokeWidth=".7" />
    <path d="M11 3 L13 1 L15 3 L13.5 5.5 Z" fill="#8d95a3" stroke="#555" strokeWidth=".6" />
  </Svg>
);
const GrowFont: React.FC<{ up?: boolean }> = ({ up }) => (
  <Svg w={16} h={17}>
    <text x={up ? 0 : 2} y="15" fontFamily="Liberation Serif" fontWeight="bold" fontSize={up ? 16 : 12} fill="#111">A</text>
    <path d={up ? 'M10 4 L13 1 L16 4 Z' : 'M10 1 L16 1 L13 4 Z'} fill="#3f659e" />
  </Svg>
);
const BorderIcon = () => (
  <Svg w={14}>
    <rect x="1" y="1" width="12" height="12" fill="none" stroke="#8a9ab0" strokeDasharray="1 1" />
    <path d="M7 1V13M1 7H13" stroke="#8a9ab0" strokeDasharray="1 1" />
    <path d="M0 13.5H14" stroke="#111" />
  </Svg>
);
const FillIcon = () => (
  <Svg w={16}>
    <path d="M3 7 L8 2 L13 7 L8 12 Z" fill="#f4f6fa" stroke="#555" />
    <path d="M13 8 q2 2 1 3 q-2 0-1-3" fill="#3f659e" />
    <rect x="0" y="12" width="16" height="4" fill="#ffff00" />
  </Svg>
);
const ColorA = () => (
  <Svg w={16}>
    <text x="2" y="11" fontFamily="Liberation Sans" fontWeight="bold" fontSize="13" fill="#2d4f8c">A</text>
    <rect x="0" y="12" width="16" height="4" fill="#f01010" />
  </Svg>
);
const Lines: React.FC<{ ys: number[]; lens?: number[]; align?: 'l' | 'c' | 'r' }> = ({ ys, lens, align = 'c' }) => (
  <Svg w={14}>
    {ys.map((y, i) => {
      const w = lens ? lens[i % lens.length] : 13;
      const x = align === 'l' ? 0.5 : align === 'r' ? 13.5 - w : 7 - w / 2;
      return <rect key={i} x={x} y={y} width={w} height="1" fill="#111" />;
    })}
  </Svg>
);
const Orientation = () => (
  <Svg w={18} h={15}>
    <text x="1" y="11" transform="rotate(-40 6 8)" fontFamily="Liberation Sans" fontWeight="bold" fontSize="9" fill="#111">ab</text>
    <path d="M5 13 L15 3 M12 3 H15 V6" fill="none" stroke="#3f659e" strokeWidth="1.3" />
  </Svg>
);
const IndentIcon: React.FC<{ out?: boolean }> = ({ out }) => (
  <Svg w={15}>
    <path d={out ? 'M1 7.5 L5 4 V11 Z' : 'M5 7.5 L1 4 V11 Z'} fill="#2f6fc4" />
    <path d="M7 1.5H14M7 4.5H14M7 7.5H14M7 10.5H14M7 13.5H14" stroke="#111" />
  </Svg>
);
const WrapIcon = () => (
  <Svg w={16}>
    <rect x=".5" y="1.5" width="13" height="13" fill="#f7f3e4" stroke="#8a7a50" />
    <path d="M2 4.5H9M2 8H7M2 11.5H7" stroke="#444" strokeWidth="1.2" />
    <path d="M7 1H15" stroke="#c0701a" strokeWidth="1.4" />
    <path d="M13.5 5 V11 H10 M11.5 9 L9.5 11 L11.5 13" fill="none" stroke="#2d4f8c" />
  </Svg>
);
const MergeIcon = () => (
  <Svg w={16}>
    <rect x=".5" y=".5" width="15" height="15" fill="#fff" stroke="#6a7a8c" />
    <rect x=".5" y="5" width="15" height="6" fill="#e9eff7" stroke="#6a7a8c" />
    <text x="3.5" y="10.5" fontFamily="Liberation Sans" fontWeight="bold" fontSize="7" fill="#111">a</text>
    <path d="M1.5 8H3M12 8H14.5" stroke="#2d4f8c" />
  </Svg>
);
const MoneyIcon = () => (
  <Svg w={17}>
    <rect x=".5" y=".5" width="14" height="10" fill="#5b85c9" stroke="#2d4f8c" />
    <circle cx="7.5" cy="5.5" r="3" fill="#cfe0f8" />
    <ellipse cx="11" cy="11" rx="4" ry="1.5" fill="#f3c530" stroke="#a57e12" strokeWidth=".6" />
    <ellipse cx="11" cy="13" rx="4" ry="1.5" fill="#f3c530" stroke="#a57e12" strokeWidth=".6" />
    <ellipse cx="11" cy="15" rx="4" ry="1.5" fill="#f3c530" stroke="#a57e12" strokeWidth=".6" />
  </Svg>
);
const DecIcon: React.FC<{ inc?: boolean }> = ({ inc }) => (
  <Svg w={17}>
    <text x={inc ? 6 : 7} y="7" fontFamily="Liberation Sans" fontWeight="bold" fontSize="7" fill="#111">{inc ? '.0' : '.0'}</text>
    <text x="5" y="15" fontFamily="Liberation Sans" fontWeight="bold" fontSize="7" fill="#111">.00</text>
    <path d={inc ? 'M1 12 L6 12 M4 10 L6 12 L4 14' : 'M1 5 L6 5 M3 3 L1 5 L3 7'} fill="none" stroke="#2f6fc4" strokeWidth="1.4" />
  </Svg>
);
const CondIcon = () => (
  <Svg w={30} h={29}>
    {[0, 1, 2, 3].map(c => [0, 1, 2, 3].map(r => (
      <rect key={`${c}${r}`} x={c * 7 + .5} y={r * 6.5 + .5} width="7" height="6.5"
        fill={c === 0 ? (r === 0 ? '#e85c44' : r === 1 ? '#5f8fd8' : r === 2 ? '#e85c44' : '#5f8fd8') : c === 1 && r > 0 && r < 3 ? (r === 1 ? '#5f8fd8' : '#e85c44') : '#eef3fa'} stroke="#8a9ab0" strokeWidth=".6" />
    )))}
    <rect x="14.5" y="14.5" width="15" height="14" fill="#fff" stroke="#333" />
    <path d="M17 18h10M17 21l4 2-4 2M23 21h4M23 25h4" fill="none" stroke="#333" />
  </Svg>
);
const TableIcon = () => (
  <Svg w={30} h={29}>
    {[0, 1, 2, 3].map(c => [0, 1, 2, 3].map(r => (
      <rect key={`${c}${r}`} x={c * 6 + .5} y={r * 6.5 + .5} width="6" height="6.5"
        fill={r === 0 ? '#c3d6f2' : r % 2 ? '#dce7f7' : '#a6c0ea'} stroke="#8fa6c7" strokeWidth=".6" />
    )))}
    <path d="M29 6 L21 18 L24 20 Z" fill="#a0683c" />
    <path d="M21 18 L24 20 L20 28 L16 27 Z" fill="#3f74c4" />
  </Svg>
);
const InsertIcon = () => (
  <Svg w={31} h={27}>
    <rect x=".5" y=".5" width="14" height="5" fill="#fff" stroke="#5f7187" /><path d="M7.5 .5V5.5" stroke="#5f7187" />
    <rect x="15.5" y="8.5" width="15" height="6" fill="#7296d6" stroke="#3f5f99" /><path d="M23 8.5V14.5" stroke="#3f5f99" />
    <path d="M6 11.5H14M9 9L6 11.5L9 14" fill="none" stroke="#222" strokeWidth="1.3" />
    <rect x=".5" y="16.5" width="14" height="10" fill="#fff" stroke="#5f7187" /><path d="M7.5 16.5V26.5M.5 21.5H14.5" stroke="#5f7187" />
  </Svg>
);
const DeleteIcon = () => (
  <Svg w={25} h={27}>
    <rect x=".5" y=".5" width="14" height="5" fill="#fff" stroke="#5f7187" /><path d="M7.5 .5V5.5" stroke="#5f7187" />
    <rect x="5.5" y="8.5" width="14" height="6" fill="none" stroke="#5f7187" strokeDasharray="1 1" />
    <path d="M14 6 L24 16 M24 6 L14 16" stroke="#ec3b1c" strokeWidth="1.8" />
    <rect x=".5" y="16.5" width="14" height="10" fill="#fff" stroke="#5f7187" /><path d="M7.5 16.5V26.5M.5 21.5H14.5" stroke="#5f7187" />
  </Svg>
);
const FormatIcon = () => (
  <Svg w={31} h={28}>
    <path d="M0 1.5H30" stroke="#333" strokeDasharray="2 2" /><path d="M8 1.5H22M20 0L22 1.5L20 3" stroke="#333" fill="none" />
    <rect x=".5" y="4.5" width="30" height="20" fill="#eef3fa" stroke="#7a8ba1" />
    <rect x="9" y="5" width="12" height="17" fill="#6d97e0" />
    <path d="M9 4.5V24.5M21 4.5V24.5M.5 11H30M.5 18H30" stroke="#b7c4d4" />
    <rect x="2" y="24" width="8" height="3.5" rx="1.5" fill="#fff" stroke="#7a8ba1" /><rect x="10" y="24" width="7" height="3.5" rx="1.5" fill="#fff" stroke="#7a8ba1" />
  </Svg>
);
const FillDown = () => (
  <Svg w={13} h={16}>
    <rect x=".5" y=".5" width="12" height="15" fill="#dde8f7" stroke="#3f659e" />
    <path d="M4.5 3H8.5V8H11L6.5 13L2 8H4.5Z" fill="#3a77cf" stroke="#264f92" strokeWidth=".6" />
  </Svg>
);
const Eraser = () => (
  <Svg w={14} h={14}>
    <path d="M1 9 L8 2 Q9 1 10 2 L13 4 Q14 5 13 6 L7 12 H3 Z" fill="#f2f2f2" stroke="#777" />
    <path d="M2 13.5H14" stroke="#111" />
  </Svg>
);
const SortIcon = () => (
  <Svg w={30} h={28}>
    <text x="1" y="12" fontFamily="Liberation Serif" fontWeight="bold" fontSize="14" fill="#2d5aa8">A</text>
    <text x="1" y="27" fontFamily="Liberation Serif" fontWeight="bold" fontSize="14" fill="#8a2b2b">Z</text>
    <path d="M11 6 H30 L23 14 V26 L18 22 V14 Z" fill="#cfd6dd" stroke="#777" />
  </Svg>
);

const Small = (d: string) => <svg width="5" height="4" viewBox="0 0 5 4"><path d={d} fill="#5f7f9f" /></svg>;

export default function App() {
  const hi = edges.indexOf(1494);
  return (
    <Window>
      <Global />
      <OfficeOrb><OfficeLogo /></OfficeOrb>
      <TitleBar>
        <QuickAccess>
          <QatSlot $w={20}><SaveIcon /></QatSlot>
          <QatSlot $w={20} $dim><UndoIcon /></QatSlot>
          <QatSlot $w={12} $dim><Caret $c="#dbe6f2" /></QatSlot>
          <QatSlot $w={20} $dim><UndoIcon flip /></QatSlot>
          <QatSlot $w={12} $dim><Caret $c="#dbe6f2" /></QatSlot>
          <QatSlot $w={18}><FormIcon /></QatSlot>
        </QuickAccess>
        <Customize><Caret $c="#dfe7f2" /></Customize>
        <WindowTitle>Spreadsheet havenmodel -def.xlsm  -  Microsoft Excel</WindowTitle>
        <WinControl />
      </TitleBar>
      <TabStrip>
        <Tab $x={41} $active>Home</Tab>
        <Tab $x={16}>Insert</Tab>
        <Tab $x={30}>Page Layout</Tab>
        <Tab $x={29}>Formulas</Tab>
        <Tab $x={30}>Data</Tab>
        <Tab $x={29}>Review</Tab>
        <Tab $x={28}>View</Tab>
        <Tab $x={30}>Developer</Tab>
      </TabStrip>
      <Ribbon>
        <Group $w={147} $first>
          <GroupBody $pl={8}>
            <PasteButton><PasteIcon /><span style={{ marginTop: 5 }}>Paste</span><Caret style={{ marginTop: 5 }} /></PasteButton>
            <SmallColumn $ml={12} $pt={1}>
              <SmallItem $gap={6}><CutIcon /> Cut</SmallItem>
              <SmallItem $gap={4}><CopyIcon /> Copy</SmallItem>
              <SmallItem $gap={3}><BrushIcon /> Format Painter</SmallItem>
            </SmallColumn>
          </GroupBody>
          <GroupLabel>Clipboard</GroupLabel>
        </Group>
        <Group $w={194}>
          <GroupBody $pl={3}>
            <ControlRows>
              <ControlRow>
                <Combo $w={97}>Calibri <Caret /></Combo>
                <Combo $w={43}>9 <Caret /></Combo>
                <BtnSet>
                  <Tool $w={22}><GrowFont up /></Tool>
                  <Tool $w={21}><GrowFont /></Tool>
                </BtnSet>
              </ControlRow>
              <ControlRow>
                <BtnSet>
                  <Tool $w={26} $serif>B</Tool>
                  <Tool $w={24} $serif><i>I</i></Tool>
                  <Tool $w={28} $serif><u>U</u> <Caret /></Tool>
                </BtnSet>
                <BtnSet><Tool $w={33}><BorderIcon /><Caret /></Tool></BtnSet>
                <BtnSet>
                  <Tool $w={33}><FillIcon /><Caret /></Tool>
                  <Tool $w={33}><ColorA /><Caret /></Tool>
                </BtnSet>
              </ControlRow>
            </ControlRows>
          </GroupBody>
          <GroupLabel>Font<Launcher /></GroupLabel>
        </Group>
        <Group $w={249}>
          <GroupBody $pl={3}>
            <ControlRows>
              <ControlRow>
                <BtnSet>
                  <Tool $w={23}><Lines ys={[2, 4, 6, 8]} /></Tool>
                  <Tool $w={23}><Lines ys={[4, 6, 8, 10]} /></Tool>
                  <Tool $w={23} $on><Lines ys={[6, 8, 10, 12]} /></Tool>
                </BtnSet>
                <BtnSet><Tool $w={31}><Orientation /><Caret /></Tool></BtnSet>
              </ControlRow>
              <ControlRow>
                <BtnSet>
                  <Tool $w={23}><Lines ys={[2, 4, 6, 8, 10, 12]} lens={[13, 9]} align="l" /></Tool>
                  <Tool $w={23}><Lines ys={[2, 4, 6, 8, 10, 12]} lens={[13, 9]} /></Tool>
                  <Tool $w={23}><Lines ys={[2, 4, 6, 8, 10, 12]} lens={[13, 9]} align="r" /></Tool>
                </BtnSet>
                <BtnSet>
                  <Tool $w={22}><IndentIcon out /></Tool>
                  <Tool $w={22}><IndentIcon /></Tool>
                </BtnSet>
              </ControlRow>
            </ControlRows>
            <Divider />
            <SmallColumn $ml={0} $pt={9}>
              <SmallItem $gap={4}><WrapIcon /> Wrap Text</SmallItem>
              <SmallItem $gap={4} style={{ marginTop: 7 }}><MergeIcon /> Merge &amp; Center <Caret /></SmallItem>
            </SmallColumn>
          </GroupBody>
          <GroupLabel>Alignment<Launcher /></GroupLabel>
        </Group>
        <Group $w={134}>
          <GroupBody $pl={2}>
            <ControlRows>
              <ControlRow><Combo $w={128}>General <Caret /></Combo></ControlRow>
              <ControlRow>
                <BtnSet>
                  <Tool $w={33}><MoneyIcon /><Caret /></Tool>
                  <Tool $w={24} $serif style={{ fontFamily: cellFont, fontSize: 12, fontWeight: 400 }}>%</Tool>
                  <Tool $w={20} $serif>,</Tool>
                </BtnSet>
                <BtnSet>
                  <Tool $w={22}><DecIcon inc /></Tool>
                  <Tool $w={22}><DecIcon /></Tool>
                </BtnSet>
              </ControlRow>
            </ControlRows>
          </GroupBody>
          <GroupLabel>Number<Launcher /></GroupLabel>
        </Group>
        <Group $w={574}>
          <GroupBody $pl={4}>
            <BigButton $w={66}><CondIcon /><span>Conditional</span><CaretLine>Formatting <Caret /></CaretLine></BigButton>
            <BigButton $w={52} style={{ marginLeft: 2 }}><TableIcon /><span>Format</span><CaretLine>as Table <Caret /></CaretLine></BigButton>
            <Gallery>
              <StyleCell $bg="#fff" $fg="#000" $selected>Normal</StyleCell>
              <StyleCell $bg="#ffc7ce" $fg="#9c0006">Bad</StyleCell>
              <StyleCell $bg="#c6efce" $fg="#006100">Good</StyleCell>
              <StyleCell $bg="#ffeb9c" $fg="#9c6500">Neutral</StyleCell>
              <StyleCell $bg="#f2f2f2" $fg="#fa7d00" $bold $box="1px solid #7f7f7f">Calculation</StyleCell>
              <StyleCell $bg="#a5a5a5" $fg="#fff" $bold $box="3px double #3f3f3f" style={{ lineHeight: '16px' }}>Check Cell</StyleCell>
              <StyleCell $bg="#fff" $fg="#7f7f7f" $italic>Explanatory T...</StyleCell>
              <StyleCell $bg="#fff" $fg="#0000ff" $link>Hyperlink</StyleCell>
            </Gallery>
            <Scroller>
              <ScrollPart $dim>{Small('M0 4 L2.5 0 L5 4Z')}</ScrollPart>
              <ScrollPart>{Small('M0 0 L2.5 4 L5 0Z')}</ScrollPart>
              <ScrollPart>{Small('M0 0 L2.5 4 L5 0Z')}</ScrollPart>
            </Scroller>
          </GroupBody>
          <GroupLabel>Styles</GroupLabel>
        </Group>
        <Group $w={133}>
          <GroupBody $pl={3}>
            <BigButton $w={42}><InsertIcon /><span>Insert</span><Caret style={{ marginTop: 6 }} /></BigButton>
            <BigButton $w={42}><DeleteIcon /><span>Delete</span><Caret style={{ marginTop: 6 }} /></BigButton>
            <BigButton $w={42}><FormatIcon /><span style={{ marginTop: -1 }}>Format</span><Caret style={{ marginTop: 6 }} /></BigButton>
          </GroupBody>
          <GroupLabel>Cells</GroupLabel>
        </Group>
        <Group $w={122}>
          <GroupBody $pl={7}>
            <SmallColumn $ml={0} $pt={1}>
              <SmallItem $gap={5}><Sigma>Σ</Sigma> AutoSum <Caret /></SmallItem>
              <SmallItem $gap={5}><FillDown /> Fill <Caret /></SmallItem>
              <SmallItem $gap={5}><Eraser /> Clear <Caret /></SmallItem>
            </SmallColumn>
            <BigButton $w={34} style={{ marginLeft: 'auto' }}><SortIcon /><span>Sort &amp;</span><CaretLine>Filter <Caret /></CaretLine></BigButton>
          </GroupBody>
          <GroupLabel>Editing</GroupLabel>
        </Group>
      </Ribbon>
      <FormulaBar>
        <NameBox>BX139 <Caret $c="#000" /></NameBox>
        <FxPill><Orb /><span>fx</span></FxPill>
      </FormulaBar>
      <HeadStrip />
      <ColHeadRow>
        <Corner />
        {edges.slice(0, -1).map((e, i) => (
          <ColHead key={e} $w={edges[i + 1] - e} $hi={i === hi}>{colName(i + (75 - hi))}</ColHead>
        ))}
      </ColHeadRow>
      <SheetBody>
        <RowHeads>
          {Array.from({ length: 95 }, (_, i) => <RowHead key={i}>{i + 1}</RowHead>)}
        </RowHeads>
        <Section $w={144}>
          <Note $k={0} $x={3} $ls={1}>UITGANGSPUNTEN</Note>
          <T k={2} x={5} cols="44px 85px" mark={15} rows={[
            ['lStartjaar', 'p1'], ['lPeriode', 'p2030'], ['lDag', 'p1'], ['lBedrijfsopp. (ha)', 'p100'],
          ]} />
          <Note $k={7} $x={3} $under>Havengelden</Note>
          <T k={8} x={5} cols="44px 85px" mark={15} rows={[
            ['lBedrijfsdichtheid', 'g100.0%'], ['lBedrijfsopp. (ha)', 'w100.0'],
          ]} />
          <MacroButton>Export<br />Parameters</MacroButton>
        </Section>
        <Section $w={250}>
          <Note $k={0} $x={2} $under>Volume &amp; Scheepsbewegingen</Note>
          <Note $k={13} $x={2} $under>Volume &amp; goederen</Note>
          <Note $k={14} $x={2} $ls={0.4}>(PETRO-)CHEMISCHE INDUSTRIE</Note>
          <Note $k={21} $x={2} $ls={0.6}>SERVICE INDUSTRIE</Note>
          <Note $k={28} $x={2} $ls={0.4}>LOGISTIEK &amp; DISTRIBUTIE</Note>
          <Note $k={37} $x={2} $ls={0.6}>OVERIGE</Note>
          {secB.map((t, i) => <T key={i} {...t} />)}
        </Section>
        <Section $w={342}>
          <Note $k={0} $x={8} $under>Havenfilosofie</Note>
          <Note $k={4} $x={8} $under>Modal split</Note>
          <Note $k={5} $x={8} $ls={0.4}>(PETRO-)CHEMISCHE INDUSTRIE</Note>
          <Note $k={4} $x={261} $ls={1.1} $under>Modal split vervoerwijze onderhoud</Note>
          <Note $k={12} $x={8} $ls={0.6}>SERVICE INDUSTRIE</Note>
          <Note $k={19} $x={8} $ls={0.4}>LOGISTIEK &amp; DISTRIBUTIE</Note>
          <Note $k={46} $x={8} $ls={0.6}>OVERIGE</Note>
          <Note $k={73} $x={8} $ls={0.6}>TOTAAL</Note>
          {secC.map((t, i) => <T key={i} {...t} />)}
        </Section>
        <Section $w={240}>
          <Note $k={0} $x={10} $ls={0.5} $under>Modal split per sector/hinterland</Note>
          <Note $k={1} $x={10} $ls={0.4}>(PETRO-)CHEMISCHE INDUSTRIE</Note>
          <Note $k={2} $x={20}>Containers</Note>
          <Note $k={3} $x={43}>IB</Note><Note $k={5} $x={43}>BIT</Note>
          <Note $k={8} $x={20}>Bulk</Note>
          <Note $k={9} $x={43}>IB</Note><Note $k={11} $x={43}>BIT</Note>
          <Note $k={14} $x={20}>Roro</Note>
          <Note $k={15} $x={43}>IB</Note><Note $k={17} $x={43}>BIT</Note>
          <Note $k={20} $x={10} $ls={0.6}>SERVICE INDUSTRIE</Note>
          <Note $k={21} $x={20}>Containers</Note>
          <Note $k={22} $x={43}>IB</Note><Note $k={24} $x={43}>BIT</Note>
          <Note $k={27} $x={20}>Bulk</Note>
          <Note $k={28} $x={43}>IB</Note><Note $k={30} $x={43}>BIT</Note>
          <Note $k={33} $x={20}>Roro</Note>
          <Note $k={34} $x={43}>IB</Note><Note $k={36} $x={43}>BIT</Note>
          <Note $k={39} $x={10} $ls={0.4}>LOGISTIEK &amp; DISTRIBUTIE</Note>
          <Note $k={40} $x={20}>Containers</Note>
          <Note $k={41} $x={43}>IB</Note><Note $k={43} $x={43}>BIT</Note>
          <Note $k={46} $x={20}>Bulk</Note>
          <Note $k={47} $x={43}>IB</Note><Note $k={49} $x={43}>BIT</Note>
          <Note $k={52} $x={20}>Roro</Note>
          <Note $k={53} $x={43}>IB</Note><Note $k={55} $x={43}>BIT</Note>
          <Note $k={58} $x={10} $ls={0.6}>OVERIGE</Note>
          <Note $k={59} $x={20}>Containers</Note>
          <Note $k={60} $x={43}>IB</Note><Note $k={62} $x={43}>BIT</Note>
          <Note $k={65} $x={20}>Bulk</Note>
          <Note $k={66} $x={43}>IB</Note><Note $k={68} $x={43}>BIT</Note>
          <Note $k={71} $x={20}>Roro</Note>
          <Note $k={72} $x={43}>IB</Note><Note $k={74} $x={43}>BIT</Note>
          {secD.map((t, i) => <T key={i} {...t} />)}
        </Section>
        <Section $w={322}>
          <Note $k={0} $x={10} $ls={0.5} $under>Modal split TOTAAL</Note>
          <Note $k={6} $x={10}>Containers</Note>
          <Note $k={7} $x={37}>IB</Note><Note $k={10} $x={35}>BIT</Note>
          <Note $k={14} $x={10}>Bulk</Note>
          <Note $k={15} $x={37}>IB</Note><Note $k={18} $x={35}>BIT</Note>
          <Note $k={22} $x={10}>Roro</Note>
          <Note $k={23} $x={37}>IB</Note><Note $k={26} $x={35}>BIT</Note>
          <Note $k={30} $x={10}>Totaal</Note>
          <Note $k={47} $x={10} $ls={0.9}>NO EMISSIES</Note>
          <Note $k={49} $x={10}>Containers</Note>
          <Note $k={50} $x={37}>IB</Note><Note $k={51} $x={35}>BIT</Note>
          <Note $k={54} $x={37}>IB</Note><Note $k={55} $x={35}>BIT</Note>
          {secE.map((t, i) => <T key={i} {...t} />)}
        </Section>
        <Section $w={276}>
          <Note $k={0} $x={2} $ls={0.4} $under>Transitiekosten</Note>
          <Note $k={16} $x={2} $ls={0.6} $under>Modal split vervoermanagement Transitiekosten</Note>
          <Note $k={24} $x={2} $ls={0.9}>NO EMISSIES</Note>
          {secF.map((t, i) => <T key={i} {...t} />)}
        </Section>
      </SheetBody>
    </Window>
  );
}
